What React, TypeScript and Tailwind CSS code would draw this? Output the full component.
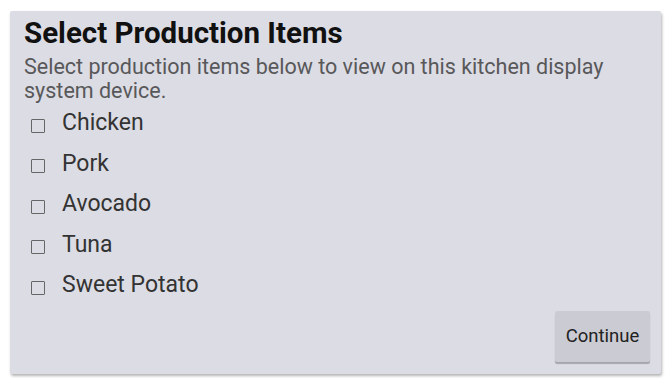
const items = ["Chicken", "Pork", "Avocado", "Tuna", "Sweet Potato"];

export default function App() {
  return (
    <div className="w-[672px] h-[383px] bg-white pt-[11px] pl-[10px]" style={{ fontFamily: "Roboto, 'Noto Sans', sans-serif" }}>
      <div className="w-[651px] h-[363px] bg-[#dcdce4] rounded-[2px] shadow-[1px_2px_3px_rgba(0,0,0,0.3)] flex flex-col pl-[14px] pr-[11px] pt-[5px] pb-[12px]">
        <h1 className="text-[29.5px] leading-[34px] font-bold text-[#111]">Select Production Items</h1>
        <p className="text-[21.5px] leading-[24px] text-[#58585a] mt-[5px] max-w-[610px]">
          Select production items below to view on this kitchen display system device.
        </p>
        <div className="flex flex-col">
          {items.map((item) => (
            <label key={item} className="flex items-center h-[40.5px] gap-[17px] pl-[7px]">
              <span className="w-[14px] h-[14px] border-[1.5px] border-[#666] rounded-[1px] mt-[5px]" />
              <span className="text-[23px] text-[#333]">{item}</span>
            </label>
          ))}
        </div>
        <div className="flex justify-end mt-auto">
          <button className="w-[95px] h-[51px] bg-[#cbccd3] text-[18.5px] text-[#222] rounded-[2px] shadow-[0_2px_1px_rgba(0,0,0,0.25)]">
            Continue
          </button>
        </div>
      </div>
    </div>
  );
}
